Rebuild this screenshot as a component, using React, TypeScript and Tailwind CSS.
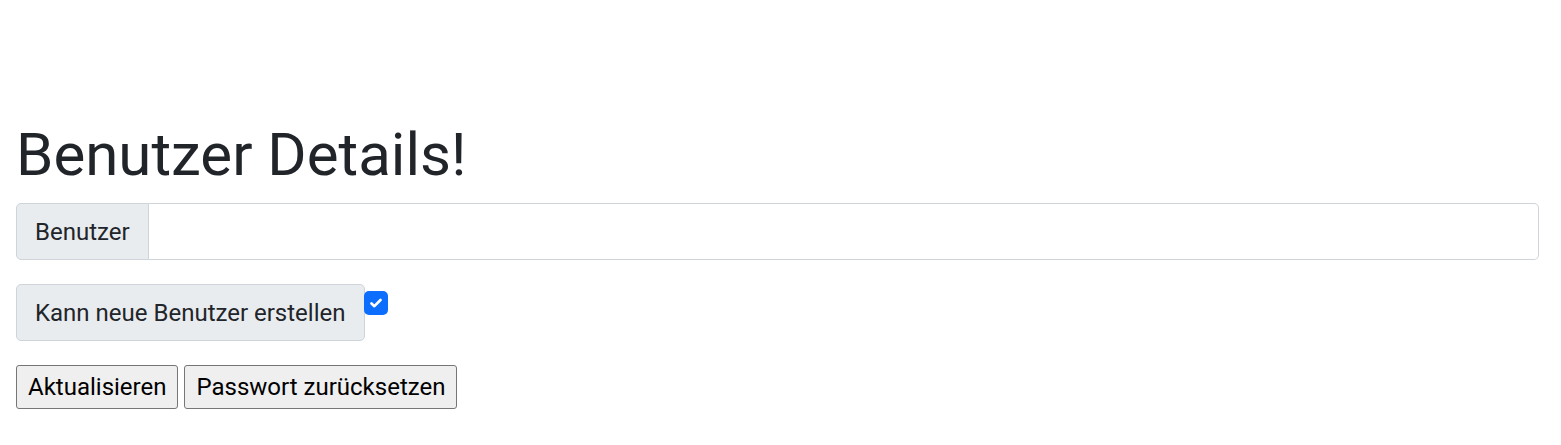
export default function App() {
  return (
    <div className="min-h-[445px] bg-white pl-[16px] pr-[22px] pt-[119px] text-[#212529]" style={{ fontFamily: "Roboto, 'Noto Sans', sans-serif" }}>
      <h1 className="m-0 mb-[12px] text-[60px] font-normal leading-[72px]">Benutzer Details!</h1>
      <div className="mb-[24px] flex h-[57px] w-full items-stretch">
        <span className="flex items-center rounded-l-[5px] border border-[#ced4da] bg-[#e9ecef] px-[18px] text-[24px] leading-[36px]">Benutzer</span>
        <input className="min-w-0 flex-1 rounded-r-[5px] border border-l-0 border-[#ced4da] bg-white px-[18px] text-[24px] outline-none" defaultValue="" />
      </div>
      <div className="mb-[24px] flex items-start">
        <span className="flex h-[57px] items-center rounded-[5px] border border-[#ced4da] bg-[#e9ecef] px-[18px] text-[24px] leading-[36px]">Kann neue Benutzer erstellen</span>
        <span className="-ml-px mt-[7px] flex h-[24px] w-[24px] items-center justify-center rounded-[5px] bg-[#0d6efd]">
          <svg width="18" height="18" viewBox="0 0 20 20" fill="none">
            <path d="M5 10.5l3.2 3 6.8-6.8" stroke="#fff" strokeWidth="3" strokeLinecap="round" strokeLinejoin="round" />
          </svg>
        </span>
      </div>
      <div className="flex gap-[6px]">
        <button className="rounded-[3px] border border-[#767676] bg-[#efefef] px-[11px] py-[3px] text-[24px] leading-[36px] text-black">Aktualisieren</button>
        <button className="rounded-[3px] border border-[#767676] bg-[#efefef] px-[11px] py-[3px] text-[24px] leading-[36px] text-black">Passwort zurücksetzen</button>
      </div>
    </div>
  );
}
